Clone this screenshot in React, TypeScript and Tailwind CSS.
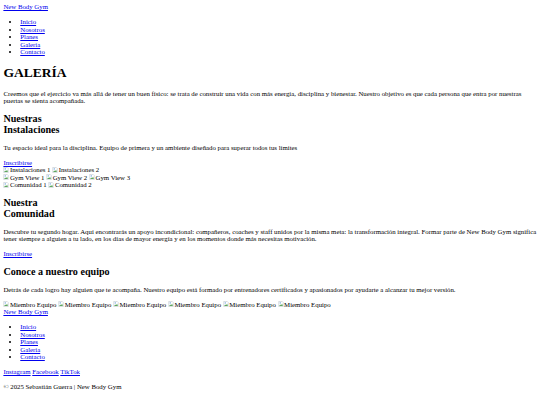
import React from 'react';

const navLinks = ['Inicio', 'Nosotros', 'Planes', 'Galería', 'Contacto'];

function BrokenImg({ alt }: { alt: string }) {
  return (
    <span>
      <svg viewBox="0 0 16 16" className="inline-block w-[6px] h-[6px] align-[-0.5px] mr-[0.5px]">
        <path d="M2 1h9l3 3v11H2z" fill="#fff" stroke="#9aa3ad" strokeWidth="1" />
        <path d="M3 13l3-4 2 2 3-4 2 6z" fill="#5aa55a" />
        <circle cx="6" cy="5" r="1.5" fill="#4a8fd8" />
      </svg>
      {alt}
    </span>
  );
}

function ImgRow({ alts }: { alts: string[] }) {
  return (
    <div>
      {alts.map((a, i) => (
        <React.Fragment key={i}>
          <BrokenImg alt={a} />
          {i < alts.length - 1 ? ' ' : ''}
        </React.Fragment>
      ))}
    </div>
  );
}

function Link({ children }: { children: React.ReactNode }) {
  return (
    <a href="#" className="text-[#0000ee] underline">
      {children}
    </a>
  );
}

function NavList() {
  return (
    <ul className="list-disc pl-[16.875px] my-[7.5px]">
      {navLinks.map((l) => (
        <li key={l}>
          <Link>{l}</Link>
        </li>
      ))}
    </ul>
  );
}

export default function App() {
  return (
    <div className="bg-white text-black font-['Liberation_Serif','Times_New_Roman',serif] text-[6.8px] leading-[7.5px] px-[3.375px] pt-[3px] min-h-[405px]">
      <header>
        <Link>New Body Gym</Link>
        <nav>
          <NavList />
        </nav>
      </header>

      <main>
        <h1 className="text-[13.5px] leading-[15px] font-bold my-[9.6px]">GALERÍA</h1>
        <p className="my-[7.5px]">
          Creemos que el ejercicio va más allá de tener un buen físico: se trata de construir una vida con más energía,
          disciplina y bienestar. Nuestro objetivo es que cada persona que entra por nuestras puertas se sienta
          acompañada.
        </p>

        <section>
          <h2 className="text-[10.125px] leading-[11px] font-bold my-[8.5px]">
            Nuestras
            <br />
            Instalaciones
          </h2>
          <p className="my-[7.5px]">
            Tu espacio ideal para la disciplina. Equipo de primera y un ambiente diseñado para superar todos tus límites
          </p>
          <Link>Inscribirse</Link>
          <ImgRow alts={['Instalaciones 1', 'Instalaciones 2']} />
          <ImgRow alts={['Gym View 1', 'Gym View 2', 'Gym View 3']} />
          <ImgRow alts={['Comunidad 1', 'Comunidad 2']} />
        </section>

        <section>
          <h2 className="text-[10.125px] leading-[11px] font-bold my-[8.5px]">
            Nuestra
            <br />
            Comunidad
          </h2>
          <p className="my-[7.5px]">
            Descubre tu segundo hogar. Aquí encontrarás un apoyo incondicional: compañeros, coaches y staff unidos por la
            misma meta: la transformación integral. Formar parte de New Body Gym significa tener siempre a alguien a tu
            lado, en los días de mayor energía y en los momentos donde más necesitas motivación.
          </p>
          <Link>Inscribirse</Link>
        </section>

        <section>
          <h2 className="text-[10.125px] leading-[11px] font-bold my-[8.5px]">Conoce a nuestro equipo</h2>
          <p className="my-[7.5px]">
            Detrás de cada logro hay alguien que te acompaña. Nuestro equipo está formado por entrenadores certificados y
            apasionados por ayudarte a alcanzar tu mejor versión.
          </p>
          <ImgRow alts={['Miembro Equipo', 'Miembro Equipo', 'Miembro Equipo', 'Miembro Equipo', 'Miembro Equipo', 'Miembro Equipo']} />
        </section>
      </main>

      <footer>
        <Link>New Body Gym</Link>
        <NavList />
        <div>
          <Link>Instagram</Link> <Link>Facebook</Link> <Link>TikTok</Link>
        </div>
        <p className="my-[7.5px]">© 2025 Sebastián Guerra | New Body Gym</p>
      </footer>
    </div>
  );
}
